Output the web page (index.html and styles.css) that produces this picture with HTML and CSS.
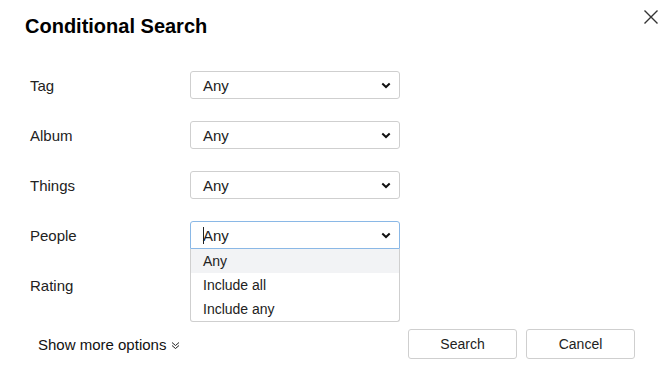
FILE: index.html
```html
<!DOCTYPE html>
<html>
<head>
<meta charset="utf-8">
<link rel="stylesheet" href="styles.css">
</head>
<body>
<div class="dialog">
  <div class="header">
    <h1 class="title">Conditional Search</h1>
    <button class="close" aria-label="Close">
      <svg width="16" height="16" viewBox="0 0 16 16"><path d="M1.5 1.5 L14.5 14.5 M14.5 1.5 L1.5 14.5" stroke="#333" stroke-width="1.4" fill="none"/></svg>
    </button>
  </div>
  <div class="form">
    <div class="row">
      <span class="label">Tag</span>
      <div class="select"><span class="value">Any</span><svg class="chev" width="10" height="7" viewBox="0 0 10 7"><path d="M1.3 1.5 L5 5 L8.7 1.5" stroke="#111" stroke-width="2" fill="none"/></svg></div>
    </div>
    <div class="row">
      <span class="label">Album</span>
      <div class="select"><span class="value">Any</span><svg class="chev" width="10" height="7" viewBox="0 0 10 7"><path d="M1.3 1.5 L5 5 L8.7 1.5" stroke="#111" stroke-width="2" fill="none"/></svg></div>
    </div>
    <div class="row">
      <span class="label">Things</span>
      <div class="select"><span class="value">Any</span><svg class="chev" width="10" height="7" viewBox="0 0 10 7"><path d="M1.3 1.5 L5 5 L8.7 1.5" stroke="#111" stroke-width="2" fill="none"/></svg></div>
    </div>
    <div class="row">
      <span class="label">People</span>
      <div class="select-wrap">
        <div class="select focused"><span class="value"><span class="caret"></span>Any</span><svg class="chev" width="10" height="7" viewBox="0 0 10 7"><path d="M1.3 1.5 L5 5 L8.7 1.5" stroke="#111" stroke-width="2" fill="none"/></svg></div>
        <ul class="menu">
          <li class="active">Any</li>
          <li>Include all</li>
          <li>Include any</li>
        </ul>
      </div>
    </div>
    <div class="row">
      <span class="label">Rating</span>
    </div>
  </div>
  <div class="footer">
    <span class="more">Show more options <svg width="9" height="9" viewBox="0 0 9 9"><path d="M1 1.5 L4.5 4.5 L8 1.5 M1 4.5 L4.5 7.5 L8 4.5" stroke="#222" stroke-width="1" fill="none"/></svg></span>
    <div class="buttons">
      <button class="btn">Search</button>
      <button class="btn">Cancel</button>
    </div>
  </div>
</div>
</body>
</html>
```

FILE: styles.css
```css
* { box-sizing: border-box; }
html, body { margin: 0; padding: 0; background: #fff; }
body {
  font-family: "Liberation Sans", Arial, sans-serif;
  color: #222;
  width: 669px;
  height: 378px;
  overflow: hidden;
}
.header {
  display: flex;
  justify-content: space-between;
  align-items: flex-start;
  height: 71px;
}
.title {
  margin: 14px 0 0 25px;
  font-size: 20px;
  font-weight: bold;
  color: #000;
  line-height: 24px;
}
.close {
  margin: 9px 10px 0 0;
  padding: 0;
  border: 0;
  background: none;
  width: 16px;
  height: 16px;
  display: block;
}
.close svg { display: block; }
.form {
  display: flex;
  flex-direction: column;
  gap: 22px;
}
.row {
  display: flex;
  align-items: flex-start;
  height: 28px;
}
.label {
  width: 190px;
  flex: none;
  padding-left: 30px;
  padding-top: 1px;
  font-size: 15px;
  line-height: 28px;
  color: #222;
}
.select-wrap {
  position: relative;
}
.select {
  width: 210px;
  height: 28px;
  border: 1px solid #cfcfcf;
  border-radius: 3px;
  display: flex;
  align-items: center;
  justify-content: space-between;
  padding: 0 8px 0 12px;
  font-size: 15px;
  color: #222;
}
.select.focused {
  border-color: #8ab8e6;
  border-radius: 3px 3px 0 0;
}
.value { position: relative; }
.caret {
  position: absolute;
  left: 0;
  top: 0px;
  width: 1px;
  height: 17px;
  background: #222;
}
.chev { display: block; }
.menu {
  position: absolute;
  left: 0;
  top: 28px;
  width: 210px;
  margin: 0;
  padding: 0;
  list-style: none;
  background: #fff;
  border: 1px solid #cfcfcf;
  border-top: 0;
  border-radius: 0 0 3px 3px;
  z-index: 2;
}
.menu li {
  height: 24px;
  line-height: 24px;
  padding-left: 12px;
  font-size: 14px;
  color: #222;
}
.menu li.active { background: #f2f3f5; }
.footer {
  display: flex;
  justify-content: space-between;
  align-items: center;
  margin-top: 30px;
  padding: 0 34px 0 38px;
}
.more {
  font-size: 15px;
  color: #111;
  display: flex;
  align-items: center;
  gap: 5px;
}
.more svg { display: block; margin-top: 2px; }
.buttons {
  display: flex;
  gap: 9px;
}
.btn {
  width: 109px;
  height: 30px;
  border: 1px solid #cfcfcf;
  border-radius: 3px;
  background: #fff;
  font-family: "Liberation Sans", Arial, sans-serif;
  font-size: 14px;
  color: #222;
  padding: 0;
}
```
